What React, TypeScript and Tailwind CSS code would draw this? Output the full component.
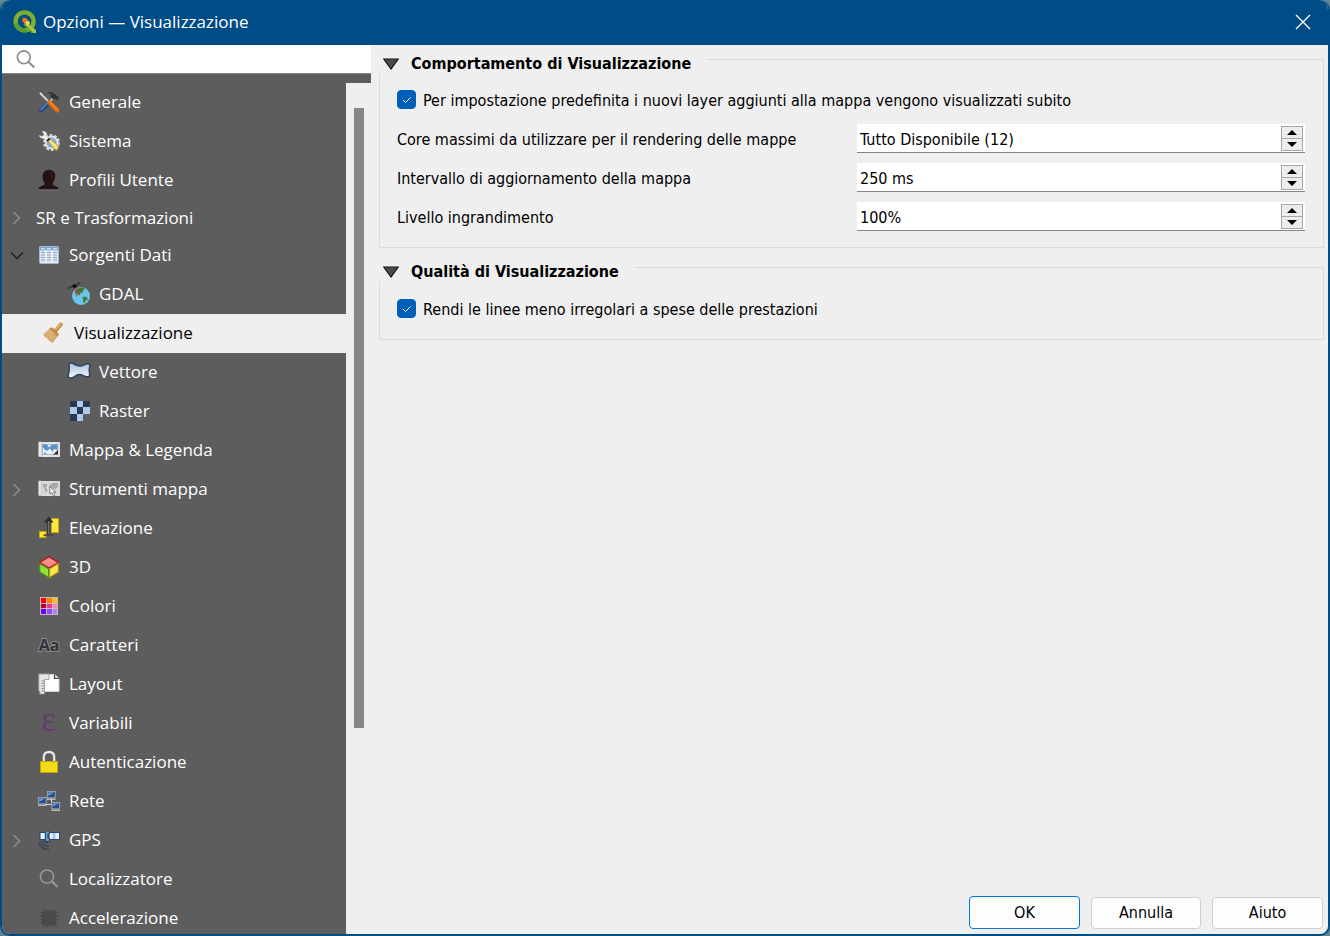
import { useState } from "react";
import type { ReactNode } from "react";

type TreeItem = {
  label: string;
  icon?: ReactNode;
  indent?: "none" | "root" | "selected" | "child";
  arrow?: "closed" | "open";
};

/* =========================
    ICONS
========================= */
function Icon({ children }: { children: ReactNode }) {
  return (
    <svg viewBox="0 0 22 22" className="size-[22px] shrink-0 overflow-visible" aria-hidden="true">
      {children}
    </svg>
  );
}

function QgisLogo() {
  return (
    <svg viewBox="0 0 24 24" className="size-6 shrink-0" aria-hidden="true">
      <circle cx="12.6" cy="11.4" r="9" fill="none" stroke="#7fb02d" strokeWidth="4.4" />
      <path d="M3.8 13.4 A9 9 0 0 0 15 20.2" fill="none" stroke="#5c9a35" strokeWidth="4" />
      <path d="M14 11.5 L24 20 V23 H19.5 L11.5 14.5z" fill="#6fa536" />
      <path d="M15 12.5 L24 20.6 V23 H22 L14 15z" fill="#a3c948" />
      <path d="M10.5 8 H14 L16.3 10.6 L13.5 14.2 L10.5 11.2z" fill="#ee7a1c" />
      <path d="M13.2 12.5 L16.3 10.8 L18.2 13 L15.2 16z" fill="#f6dc4b" />
    </svg>
  );
}

const ToolsIcon = (
  <Icon>
    <path d="M2 2 L12 12" stroke="#d5d5d5" strokeWidth="1.8" />
    <path d="M1.5 1.5 L4 2.5 L3 4z" fill="#eee" />
    <path d="M15 7 L10 13" stroke="#c9b08d" strokeWidth="2" />
    <path d="M9 1 Q14 .5 17 3 L21 7 L19.5 9.5 L17.5 7.5 L15.5 8.5 L12.5 6 L13 3.5z" fill="#2d3436" />
    <path d="M3 19.5 L9.5 13" stroke="#254b80" strokeWidth="4" strokeLinecap="round" />
    <path d="M3 18.5 L9 12.5" stroke="#5b8fce" strokeWidth="1.3" strokeLinecap="round" />
    <path d="M11 11 L19.5 19.5" stroke="#e86b0c" strokeWidth="4" strokeLinecap="round" />
    <path d="M11.5 10.5 L19.5 18.5" stroke="#ff9d3c" strokeWidth="1" />
  </Icon>
);

const SystemIcon = (
  <Icon>
    <circle cx="13.5" cy="12.5" r="7.3" fill="none" stroke="#dcdcdc" strokeWidth="2.2" strokeDasharray="3 1.6" />
    <circle cx="13.5" cy="12.5" r="5.9" fill="#83aee0" stroke="#e9e9e9" strokeWidth="1.5" />
    <path d="M4 1.5 Q8 .5 9 4 L8.5 6 L12 9.5 L9.5 12 L6 8.5 Q2.5 9 1 5.5 L4.5 6.3 L6.2 4.5z" fill="#f1f1f1" stroke="#b5b5b5" strokeWidth=".5" />
    <path d="M9.5 10.5 L12 8.5 L21 16.5 L19 20.5 L16 19z" fill="#ecd87a" stroke="#99853b" strokeWidth=".7" />
    <path d="M9 11 L11.7 8.5" stroke="#222" strokeWidth="2" />
    <path d="M13 12 L18.5 17.5" stroke="#fff3ad" />
  </Icon>
);

const UserIcon = (
  <Icon>
    <path d="M0 21 Q.5 17.5 5 16.5 Q7 16 6.7 14.5 Q4.5 12 4.5 7 Q5 1 11 .8 Q17.5 1 17.3 7 Q17 12 14.7 14.5 Q14.5 16.2 17 16.7 Q20.5 17.7 21 21z" fill="#241312" />
    <path d="M12 2 Q16 2.5 15.7 8 Q15.5 12 13 14 Q13 7 12 2" fill="#2b1816" />
    <path d="M0 20.8 H21" stroke="#8b8b8b" strokeWidth=".8" />
  </Icon>
);

const TableIcon = (
  <Icon>
    <rect x="1.5" y="2.5" width="19" height="17" rx="1" fill="#dde6f0" stroke="#9db9d9" />
    <rect x="2" y="3" width="18" height="3.4" fill="#7ba7d8" />
    <path d="M3 4.7 H7 M9 4.7 H13 M15 4.7 H19" stroke="#c9dcf1" strokeWidth="1.4" />
    <path d="M3 8.5 H7 M9 8.5 H13 M15 8.5 H19 M3 11 H7 M9 11 H13 M15 11 H19 M3 13.5 H7 M9 13.5 H13 M15 13.5 H19 M3 16 H7 M9 16 H13 M15 16 H19" stroke="#93a8bf" strokeWidth="1.1" />
    <path d="M8 6 V19 M14 6 V19" stroke="#f4f7fb" strokeWidth="1" />
  </Icon>
);

const GlobeIcon = (
  <Icon>
    <circle cx="13" cy="13" r="9" fill="#6cc5ef" />
    <path d="M8.5 6 L14 4.2 L17 6 L14.5 8 L15 10 L12.5 9.5 L12 12.5 L9.5 10.5 L7 11z" fill="#49722d" />
    <path d="M14 14 L18 13.5 L20 16 L17 18.5 L16.5 20.5 L15 19 L15 16z" fill="#3d8635" />
    <path d="M6.5 3.5 L11 10 L8.5 13.5 M6.5 4 L8.5 13" stroke="#b33f42" strokeWidth=".8" fill="none" />
    <path d="M0 5.5 L4.5 3 M8 2 L12 0" stroke="#393939" strokeWidth="2" />
    <path d="M4 2.5 L7 .8 L9 4 L5.5 5.2z" fill="#0b0b0b" />
  </Icon>
);

const BrushIcon = (
  <svg viewBox="0 0 20 22" className="h-[22px] w-5 shrink-0" aria-hidden="true">
    <path d="M18 2.5 L12.5 8.5" stroke="#b77b2a" strokeWidth="3.6" strokeLinecap="round" />
    <path d="M18 2.2 L12 8.2" stroke="#e1ac5f" strokeWidth="2" strokeLinecap="round" />
    <path d="M7 6.5 L9 5.8 L15.5 12 L14.5 14.2z" fill="#cf9342" stroke="#a87227" strokeWidth=".7" />
    <path d="M6.7 7 L14 14.4 L9.5 20.5 Q7.5 19.5 7 18.5 Q5 18 4.7 16 Q1.5 15 .8 12.5z" fill="#e0b578" stroke="#b98a49" strokeWidth=".6" />
    <path d="M8 9 L3 14 M9.5 10.5 L5 16 M11 12 L7 18 M12.5 13.5 L9 19" stroke="#bf9358" strokeWidth=".6" />
  </svg>
);

const VectorIcon = (
  <Icon>
    <defs>
      <linearGradient id="vec" x1="0" y1="0" x2="0" y2="1">
        <stop offset="0" stopColor="#a7c2e0" />
        <stop offset="1" stopColor="#f5f8fc" />
      </linearGradient>
    </defs>
    <path d="M1 2.8 Q2 1.3 5 2.3 Q11 6.8 16 3.8 Q20 1.8 22 3.5 Q20.5 9 21.8 14.8 Q19 16.8 16 15 Q11.5 11.8 6 15.9 Q2.5 18.3 0 15.8 Q2 9 1 2.8z" fill="url(#vec)" stroke="#2f4358" strokeWidth="1.5" />
  </Icon>
);

const RasterIcon = (
  <Icon>
    <path d="M2 1 H22 V14 H15 V21 H2z" fill="#2a394d" />
    <path d="M9 1 H15 V7 H9z M2 7 H9 V14 H2z M15 7 H22 V14 H15z M9 14 H15 V21 H9z" fill="#aecbeb" />
  </Icon>
);

const MapIcon = (
  <Icon>
    <path d="M1 3.5 H21.5 V17.5 H1z" fill="#e4e4e4" stroke="#f5f5f5" strokeWidth=".8" />
    <path d="M.8 2.8 H3 V17.5 H.8z" fill="#fafafa" stroke="#a5a5a5" strokeWidth=".5" />
    <rect x="4.3" y="5.3" width="15.5" height="10.4" fill="#eef4fb" stroke="#8697aa" strokeWidth=".6" />
    <path d="M4.5 5.5 H9 L11 8.5 L14 5.5 H19.5 V11 L16 10 L14.5 13 L12 9.5 L9 12 L6 10 L4.5 8z" fill="#5e90cb" />
    <path d="M5 15.5 L7 12.5 L9 15.5z" fill="#7ba9dc" />
    <path d="M15 15.5 L20 11 V15.5z" fill="#343434" />
  </Icon>
);

const MapToolsIcon = (
  <Icon>
    <path d="M1 3.5 H21.5 V17.5 H1z" fill="#d8d8d8" stroke="#f0f0f0" strokeWidth=".8" />
    <path d="M.8 2.8 H3 V17.5 H.8z" fill="#f5f5f5" stroke="#a5a5a5" strokeWidth=".5" />
    <path d="M4.5 6 H9.5 L8.5 8.5 L7 9 L9.5 12 L8 15 L6.5 11 L5 8z M12 6.5 L15 4.8 H20 V9 L18 10 L16.5 12 L15.5 9.5 L13.5 14 L11.5 10.5z" fill="#a8a8a8" />
    <path d="M11.5 8.5 L12 16 L14 14.5 L15.5 18.3 L17 17.5 L15.5 14 H18z" fill="#f5f5f5" stroke="#707070" strokeWidth=".8" />
  </Icon>
);

const ElevationIcon = (
  <Icon>
    <rect x="13.5" y="1.5" width="7" height="14" fill="#ffe83b" stroke="#c8a60b" />
    <rect x="1.5" y="14.5" width="6.5" height="6" fill="#ffe62e" stroke="#c8a60b" />
    <path d="M5.5 18.3 H16" stroke="#4b4b4b" strokeWidth="1.8" />
    <path d="M10.8 17.5 V3" stroke="#25292d" strokeWidth="3" />
    <path d="M10.8 17 V4" stroke="#9b9fa3" strokeWidth=".9" />
    <path d="M7 5.5 L10.8 1.2 L14.5 5.5" fill="none" stroke="#25292d" strokeWidth="1.8" />
  </Icon>
);

const CubeIcon = (
  <Icon>
    <path d="M11 .8 L20.3 6.5 L11 12 L1.7 6.5z" fill="#ff8b8b" stroke="#b4121b" strokeWidth="1.3" />
    <path d="M1.7 7.5 L10.6 12.8 V21.5 L1.7 16z" fill="#92df38" stroke="#508e12" strokeWidth="1.1" />
    <path d="M20.3 7.5 L11.6 12.8 V21.5 L20.3 16z" fill="#ffe94a" stroke="#b49414" strokeWidth="1.1" />
  </Icon>
);

const ColorsIcon = (
  <Icon>
    <rect x="2" y="2" width="18" height="18" fill="#c9b9bd" />
    <rect x="3" y="3" width="5" height="5" fill="#ff0000" />
    <rect x="9" y="3" width="5" height="5" fill="#ff8500" />
    <rect x="15" y="3" width="4" height="5" fill="#ffc000" />
    <rect x="3" y="9" width="5" height="4" fill="#b30038" />
    <rect x="9" y="9" width="5" height="4" fill="#ec3593" />
    <rect x="15" y="9" width="4" height="4" fill="#ff83bd" />
    <rect x="3" y="14" width="5" height="5" fill="#6a00ff" />
    <rect x="9" y="14" width="5" height="5" fill="#9349ff" />
    <rect x="15" y="14" width="4" height="5" fill="#ac83f8" />
  </Icon>
);

const FontsIcon = (
  <Icon>
    <text x="11" y="17" textAnchor="middle" fontFamily="'Open Sans', sans-serif" fontSize="16" fontWeight="700" fill="#2d3338" stroke="#8a8a8a" strokeWidth="2" paintOrder="stroke">
      Aa
    </text>
  </Icon>
);

const LayoutIcon = (
  <Icon>
    <path d="M4 1.5 H16.5 L21 5.5 V18.5 H4z" fill="#fff" stroke="#d3d3d3" />
    <path d="M16.5 1.5 V5.5 H21" fill="#d8d8d8" stroke="#4a4a4a" strokeWidth="1.2" />
    <path d="M.8 1 H11 V6.5 H6.5 V21 H1.8 V18 H.8z" fill="#e6e6e6" stroke="#9d9d9d" strokeWidth=".9" />
    <path d="M3.5 8 H6 M3.5 10.5 H6 M3.5 13 H6 M3.5 15.5 H6 M3.5 18 H6" stroke="#777" strokeWidth=".8" />
  </Icon>
);

const EpsilonIcon = (
  <Icon>
    <text x="10.5" y="19" textAnchor="middle" fontFamily="'Liberation Serif', serif" fontSize="36" fill="#633b6c">
      ε
    </text>
  </Icon>
);

const LockIcon = (
  <Icon>
    <path d="M5.8 11 V6 Q5.8 1 11 1 Q16.2 1 16.2 6 V11" fill="none" stroke="#8c8c8c" strokeWidth="3" />
    <path d="M5.8 11 V6 Q5.8 1 11 1 Q16.2 1 16.2 6 V11" fill="none" stroke="#ededed" strokeWidth="1.8" />
    <rect x="2.5" y="10.5" width="17" height="11" fill="#f1dc1a" stroke="#c3a50b" />
  </Icon>
);

function Monitor({ x, y }: { x: number; y: number }) {
  return (
    <g transform={`translate(${x} ${y})`}>
      <rect x=".4" y=".4" width="7.8" height="6.4" fill="#1f4f98" stroke="#a9a8a2" strokeWidth=".9" />
      <path d="M1.2 1.2 H7.4 L1.2 5z" fill="#6d93c8" />
      <path d="M0 8.2 H8.6" stroke="#bdbbb2" strokeWidth="1.6" />
    </g>
  );
}

const NetworkIcon = (
  <Icon>
    <path d="M13.5 8 V14 M7 14.5 H15" stroke="#d9d9d9" strokeWidth="1" />
    <Monitor x={9} y={1} />
    <Monitor x={0} y={7} />
    <Monitor x={13.4} y={12} />
  </Icon>
);

const SatelliteIcon = (
  <Icon>
    <rect x="2" y="3.5" width="5.5" height="7" fill="#e9f1fa" stroke="#27466a" />
    <rect x="11" y="3.5" width="10.5" height="7" fill="#e6eef8" stroke="#27466a" />
    <path d="M16 4 V10" stroke="#a9c6e8" strokeWidth="3" />
    <path d="M7.3 3.5 L9 2 H11.5 V5 H10 V9.5 H11.5 V12.5 H9 L7.3 11z" fill="#5e9bdd" stroke="#27466a" />
    <path d="M10 13.5 Q6.5 14 5.5 11.5 M10.5 17 Q4.5 17.3 3 11.8 M11 20.5 Q2.5 20.5 .8 13" fill="none" stroke="#36475a" strokeWidth="1.4" />
  </Icon>
);

const LocatorIcon = (
  <Icon>
    <circle cx="9" cy="8.5" r="6.6" fill="none" stroke="#9a9a9a" strokeWidth="1.5" />
    <path d="M13.8 13.2 L19.5 19" stroke="#9a9a9a" strokeWidth="2" />
  </Icon>
);

const ChipIcon = (
  <Icon>
    <path d="M6 2 V20 M9.3 2 V20 M12.6 2 V20 M16 2 V20 M2 6 H20 M2 9.3 H20 M2 12.6 H20 M2 16 H20" stroke="#494949" strokeWidth="1.2" />
    <rect x="4" y="4" width="14" height="14" rx="1" fill="#4a4a4a" />
  </Icon>
);

/* =========================
    SIDEBAR TREE
========================= */
const items: TreeItem[] = [
  { label: "Generale", icon: ToolsIcon },
  { label: "Sistema", icon: SystemIcon },
  { label: "Profili Utente", icon: UserIcon },
  { label: "SR e Trasformazioni", indent: "none", arrow: "closed" },
  { label: "Sorgenti Dati", icon: TableIcon, arrow: "open" },
  { label: "GDAL", icon: GlobeIcon, indent: "child" },
  { label: "Visualizzazione", icon: BrushIcon, indent: "selected" },
  { label: "Vettore", icon: VectorIcon, indent: "child" },
  { label: "Raster", icon: RasterIcon, indent: "child" },
  { label: "Mappa & Legenda", icon: MapIcon },
  { label: "Strumenti mappa", icon: MapToolsIcon, arrow: "closed" },
  { label: "Elevazione", icon: ElevationIcon },
  { label: "3D", icon: CubeIcon },
  { label: "Colori", icon: ColorsIcon },
  { label: "Caratteri", icon: FontsIcon },
  { label: "Layout", icon: LayoutIcon },
  { label: "Variabili", icon: EpsilonIcon },
  { label: "Autenticazione", icon: LockIcon },
  { label: "Rete", icon: NetworkIcon },
  { label: "GPS", icon: SatelliteIcon, arrow: "closed" },
  { label: "Localizzatore", icon: LocatorIcon },
  { label: "Accelerazione", icon: ChipIcon },
];

const rowStyles = {
  none: "h-9 pl-[34px] text-white",
  root: "h-[39px] gap-[9px] pl-9 pb-0.5 text-white",
  selected: "h-[39px] gap-[11px] bg-[#efefef] pl-[41px] pb-0.5 text-black",
  child: "h-[39px] gap-[9px] pl-[66px] pb-0.5 text-white",
};

function TreeRow({ item }: { item: TreeItem }) {
  return (
    <li className="relative shrink-0">
      {item.arrow && (
        <svg
          viewBox="0 0 16 16"
          className="absolute top-1/2 left-[7px] size-4 -translate-y-1/2"
          fill="none"
          strokeWidth="1.6"
          aria-hidden="true"
        >
          {item.arrow === "open" ? (
            <path d="M2 4.5 L8 10.5 L14 4.5" stroke="#262626" />
          ) : (
            <path d="M4.5 2 L10.5 8 L4.5 14" stroke="#8c8c8c" />
          )}
        </svg>
      )}
      <button
        type="button"
        className={`flex w-full items-center text-left text-[17px] leading-6 whitespace-nowrap ${rowStyles[item.indent ?? "root"]}`}
      >
        {item.icon}
        <span>{item.label}</span>
      </button>
    </li>
  );
}

/* =========================
    FORM PARTS
========================= */
function Group({ title, children }: { title: string; children: ReactNode }) {
  return (
    <fieldset className="border border-[#dcdcdc] pr-[18px] pb-4 pl-[17px]">
      <legend className="-ml-[18px] bg-[#efefef] pr-4">
        <button type="button" className="flex h-7 items-center gap-3 pt-2.5 pl-1 text-base leading-5 font-bold">
          <svg viewBox="0 0 16 12" className="h-3 w-4" aria-hidden="true">
            <path d="M.8 1 H15.2 L8 11z" fill="#4a4a4a" stroke="#151515" strokeWidth="1.2" />
          </svg>
          {title}
        </button>
      </legend>
      {children}
    </fieldset>
  );
}

function Check({ id, label }: { id: string; label: string }) {
  const [on, setOn] = useState(true);

  return (
    <div className="mt-[15px] flex items-center gap-[7px]">
      <span className="relative flex size-[19px] shrink-0">
        <input
          id={id}
          type="checkbox"
          checked={on}
          onChange={() => setOn(!on)}
          className="size-[19px] appearance-none rounded border border-[#005fb8] bg-white checked:bg-[#005fb8]"
        />
        {on && (
          <svg viewBox="0 0 19 19" className="pointer-events-none absolute inset-0" fill="none" aria-hidden="true">
            <path d="M6 10 L8.5 12.5 L13.5 7.5" stroke="#fff" />
          </svg>
        )}
      </span>
      <label htmlFor={id} className="pt-0.5 leading-[21px]">
        {label}
      </label>
    </div>
  );
}

function SpinField({ id, label, value }: { id: string; label: string; value: string }) {
  return (
    <>
      <label htmlFor={id} className="pt-0.5 leading-[27px]">
        {label}
      </label>
      <div className="flex h-[29px] border-b border-[#868686] bg-white pr-0.5">
        <input id={id} defaultValue={value} className="min-w-0 flex-1 px-[3px] pt-1 leading-6 outline-none" />
        <div className="mt-0.5 mb-px flex w-[22px] flex-col border border-[#a8a8a8] bg-[#ececec]">
          <button type="button" aria-label="Aumenta" className="flex flex-1 items-center justify-center border-b border-[#a8a8a8]">
            <svg viewBox="0 0 10 5" className="h-[5px] w-2.5">
              <path d="M0 5 L5 0 L10 5z" />
            </svg>
          </button>
          <button type="button" aria-label="Diminuisci" className="flex flex-1 items-center justify-center">
            <svg viewBox="0 0 10 5" className="h-[5px] w-2.5">
              <path d="M0 0 L5 5 L10 0z" />
            </svg>
          </button>
        </div>
      </div>
    </>
  );
}

export default function App() {
  return (
    <div className="h-screen bg-[#5f8391]">
      <div className="flex h-full flex-col overflow-hidden rounded-[10px] border-2 border-t-0 border-[#004c87] bg-[#efefef] font-['DejaVu_Sans_Condensed','DejaVu_Sans',sans-serif] text-base text-black">

        {/* =========================
            TITLE BAR
        ========================= */}
        <header className="flex h-[45px] shrink-0 items-center justify-between bg-[#004c87] pr-[17px] pb-0.5 pl-2.5 text-white">
          <div className="flex items-center gap-[7px]">
            <QgisLogo />
            <h1 className="font-['Open_Sans','Noto_Sans',sans-serif] text-[17px] leading-6">Opzioni — Visualizzazione</h1>
          </div>
          <button type="button" aria-label="Chiudi">
            <svg viewBox="0 0 16 16" className="size-4" stroke="#fff" strokeWidth="1.4">
              <path d="M1 1 L15 15 M15 1 L1 15" />
            </svg>
          </button>
        </header>

        <div className="flex min-h-0 flex-1">

          {/* =========================
              SIDEBAR
          ========================= */}
          <aside className="flex w-[369px] shrink-0 flex-col font-['Open_Sans','Noto_Sans',sans-serif]">
            <div className="flex h-[29px] shrink-0 items-center gap-2 border-b border-[#868686] bg-white pl-3">
              <svg viewBox="0 0 22 22" className="size-[22px]" fill="none" stroke="#8b8b8b" aria-hidden="true">
                <circle cx="9.8" cy="9.3" r="6.4" strokeWidth="1.6" />
                <path d="M14.5 14 L20.3 19.5" strokeWidth="2" />
              </svg>
              <input type="search" aria-label="Cerca" className="min-w-0 flex-1 text-[17px] outline-none" />
            </div>
            <div className="h-[9px] shrink-0 bg-[#5d5d5d]" />
            <div className="flex min-h-0 flex-1">
              <nav className="min-w-0 flex-1 overflow-hidden bg-[#5d5d5d]">
                <ul className="flex flex-col">
                  {items.map((item) => (
                    <TreeRow key={item.label} item={item} />
                  ))}
                </ul>
              </nav>
              <div className="w-[25px] pt-[25px] pl-2">
                <div className="h-3/4 w-2.5 bg-[#868686]" />
              </div>
            </div>
          </aside>

          {/* =========================
              OPTIONS PANEL
          ========================= */}
          <main className="flex min-w-0 flex-1 flex-col pr-1 pl-2">
            <div className="flex flex-1 flex-col gap-[5px]">
              <Group title="Comportamento di Visualizzazione">
                <Check
                  id="new-layers"
                  label="Per impostazione predefinita i nuovi layer aggiunti alla mappa vengono visualizzati subito"
                />
                <div className="mt-[13px] grid grid-cols-[460px_1fr] gap-y-2.5">
                  <SpinField id="cores" label="Core massimi da utilizzare per il rendering delle mappe" value="Tutto Disponibile (12)" />
                  <SpinField id="interval" label="Intervallo di aggiornamento della mappa" value="250 ms" />
                  <SpinField id="zoom" label="Livello ingrandimento" value="100%" />
                </div>
              </Group>
              <Group title="Qualità di Visualizzazione">
                <div className="pt-px pb-[3px]">
                  <Check id="antialias" label="Rendi le linee meno irregolari a spese delle prestazioni" />
                </div>
              </Group>
            </div>

            <footer className="flex items-end justify-end gap-[11px] pr-px pb-[5px]">
              <button type="button" className="h-[33px] w-[111px] rounded border border-[#0078d4] bg-[#fdfdfd]">
                OK
              </button>
              <button type="button" className="h-8 w-[110px] rounded border border-[#d0d0d0] bg-[#fdfdfd]">
                Annulla
              </button>
              <button type="button" className="h-8 w-[111px] rounded border border-[#d0d0d0] bg-[#fdfdfd]">
                Aiuto
              </button>
            </footer>
          </main>
        </div>
      </div>
    </div>
  );
}
